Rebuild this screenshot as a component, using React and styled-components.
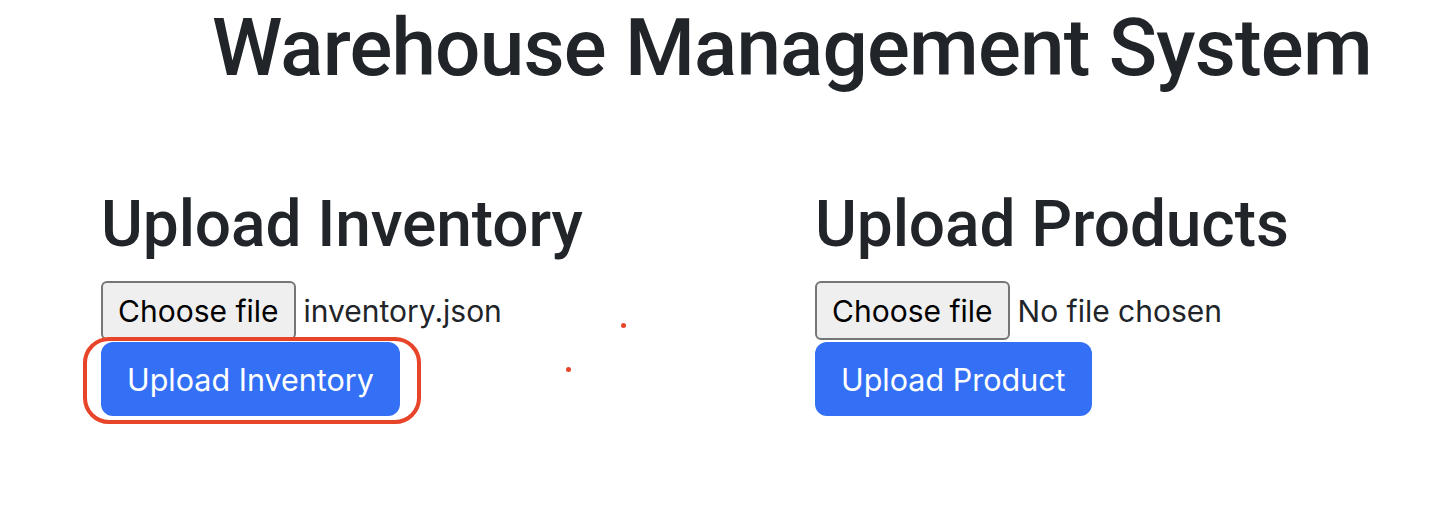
import React from 'react';
import styled, { createGlobalStyle } from 'styled-components';

const GlobalStyle = createGlobalStyle`
  body {
    margin: 0;
    background: #fff;
    color: #212529;
    font-family: Inter, "Liberation Sans", sans-serif;
  }
`;

const Page = styled.div`
  padding-left: 101px;
  height: 520px;
  overflow: hidden;
`;

const Title = styled.h1`
  margin: 0;
  padding: 0 0 0 111px;
  font-family: Roboto, Inter, sans-serif;
  font-size: 80px;
  font-weight: 500;
  line-height: 96px;
  letter-spacing: -0.8px;
  white-space: nowrap;
`;

const Columns = styled.div`
  position: relative;
  display: grid;
  grid-template-columns: 714px 714px;
  margin-top: 91px;
`;

const Section = styled.section`
  display: flex;
  flex-direction: column;
  align-items: flex-start;
`;

const Heading = styled.h2`
  margin: 0 0 18px;
  font-family: Roboto, Inter, sans-serif;
  font-size: 64px;
  font-weight: 500;
  line-height: 76px;
  letter-spacing: -0.1px;
`;

const FileRow = styled.label`
  display: flex;
  align-items: center;
  gap: 8px;
  font-size: 30px;
  cursor: pointer;
`;

const ChooseButton = styled.span`
  box-sizing: border-box;
  height: 59px;
  padding: 0 15px;
  display: inline-flex;
  align-items: center;
  background: #efefef;
  border: 2px solid #767676;
  border-radius: 6px;
  color: #000;
`;

const FileName = styled.span`
  color: #212529;
`;

const Annotated = styled.div`
  position: relative;
  margin-top: 2px;
`;

const Ring = styled.div`
  position: absolute;
  left: -18px;
  right: -21px;
  top: -5px;
  bottom: -8px;
  border: 4px solid #e8442a;
  border-radius: 26px;
  pointer-events: none;
`;

const UploadButton = styled.button`
  display: block;
  height: 74px;
  padding: 0 26px;
  margin-top: ${p => (p.$gap ? '2px' : '0')};
  border: none;
  border-radius: 12px;
  background: #3370f5;
  color: #fff;
  font-family: inherit;
  font-size: 30.5px;
  cursor: pointer;
`;

const Dot = styled.span`
  position: absolute;
  width: 5px;
  height: 5px;
  border-radius: 50%;
  background: #e8442a;
`;

function Uploader({ title, fileName, action, highlight }) {
  const button = <UploadButton $gap={!highlight}>{action}</UploadButton>;
  return (
    <Section>
      <Heading>{title}</Heading>
      <FileRow>
        <ChooseButton>Choose file</ChooseButton>
        <FileName>{fileName}</FileName>
      </FileRow>
      {highlight ? (
        <Annotated>
          {button}
          <Ring />
        </Annotated>
      ) : (
        button
      )}
    </Section>
  );
}

export default function App() {
  return (
    <Page>
      <GlobalStyle />
      <Title>Warehouse Management System</Title>
      <Columns>
        <Uploader
          title="Upload Inventory"
          fileName="inventory.json"
          action="Upload Inventory"
          highlight
        />
        <Uploader
          title="Upload Products"
          fileName="No file chosen"
          action="Upload Product"
        />
        <Dot style={{ left: 520, top: 136 }} />
        <Dot style={{ left: 465, top: 180 }} />
      </Columns>
    </Page>
  );
}
